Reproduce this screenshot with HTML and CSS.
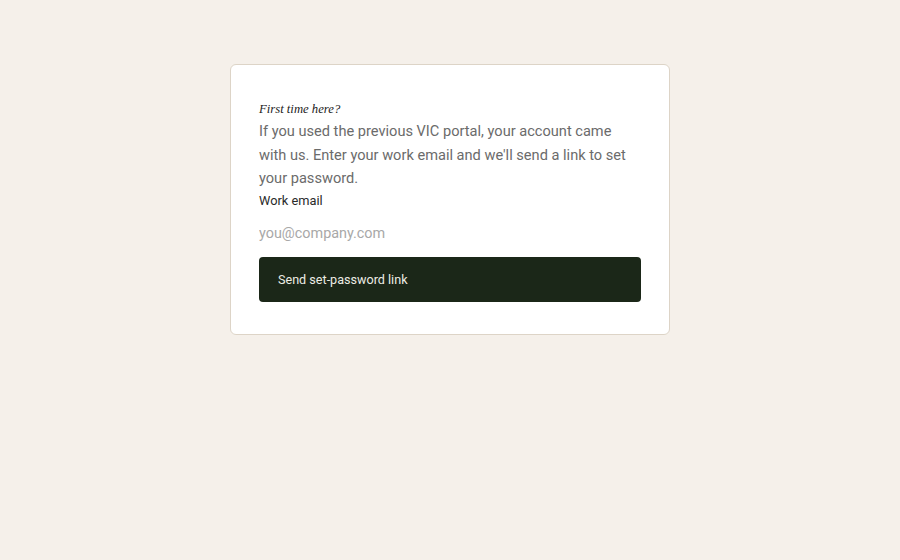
FILE: index.html
```html
<!DOCTYPE html>
<html lang="en">

<head>
    <meta charset="UTF-8">
    <meta name="viewport" content="width=device-width, initial-scale=1.0">
    <title>Set password</title>
    <link rel="stylesheet" href="styles.css">
</head>

<body>
    <main class="page">
        <section class="card">
            <h2 class="card-title">First time here?</h2>
            <p class="card-text">If you used the previous VIC portal, your account came with us. Enter your work email and we'll send a link to set your password.</p>

            <form class="form" onsubmit="return false;">
                <label for="email">Work email</label>
                <input type="email" id="email" name="email" placeholder="you@company.com">
                <button type="submit">Send set-password link</button>
            </form>
        </section>
    </main>
</body>

</html>
```

FILE: styles.css
```css
body {
    font-family: Roboto, "Liberation Sans", Arial, sans-serif;
    margin: 0;
    padding: 0;
    background-color: #f5f0ea;
}

.page {
    padding-top: 64px;
}

.card {
    box-sizing: border-box;
    width: 440px;
    margin: 0 auto;
    padding: 33px 28px 32px;
    background-color: white;
    border: 1px solid #ddd4c7;
    border-radius: 6px;
}

.card-title {
    margin: 0;
    font-family: "Liberation Serif", "Times New Roman", serif;
    font-style: italic;
    font-weight: normal;
    font-size: 12.7px;
    line-height: 22px;
    color: #1c1c1c;
}

.card-text {
    margin: 0;
    font-size: 14.6px;
    line-height: 23.5px;
    color: #6b6b6b;
}

.form {
    display: flex;
    flex-direction: column;
}

label {
    margin-top: 1px;
    font-size: 12.8px;
    line-height: 18px;
    color: #2a2a2a;
}

input[type="email"] {
    height: 34px;
    padding: 0;
    margin: 7px 0 6px;
    border: none;
    outline: none;
    font-family: inherit;
    font-size: 14.4px;
    color: #333;
}

input::placeholder {
    color: #a8a8a8;
}

button {
    height: 45px;
    padding: 0 19px;
    border: none;
    border-radius: 4px;
    background-color: #1b2718;
    color: #ecece4;
    font-family: inherit;
    font-size: 12.6px;
    text-align: left;
    cursor: pointer;
}
```
